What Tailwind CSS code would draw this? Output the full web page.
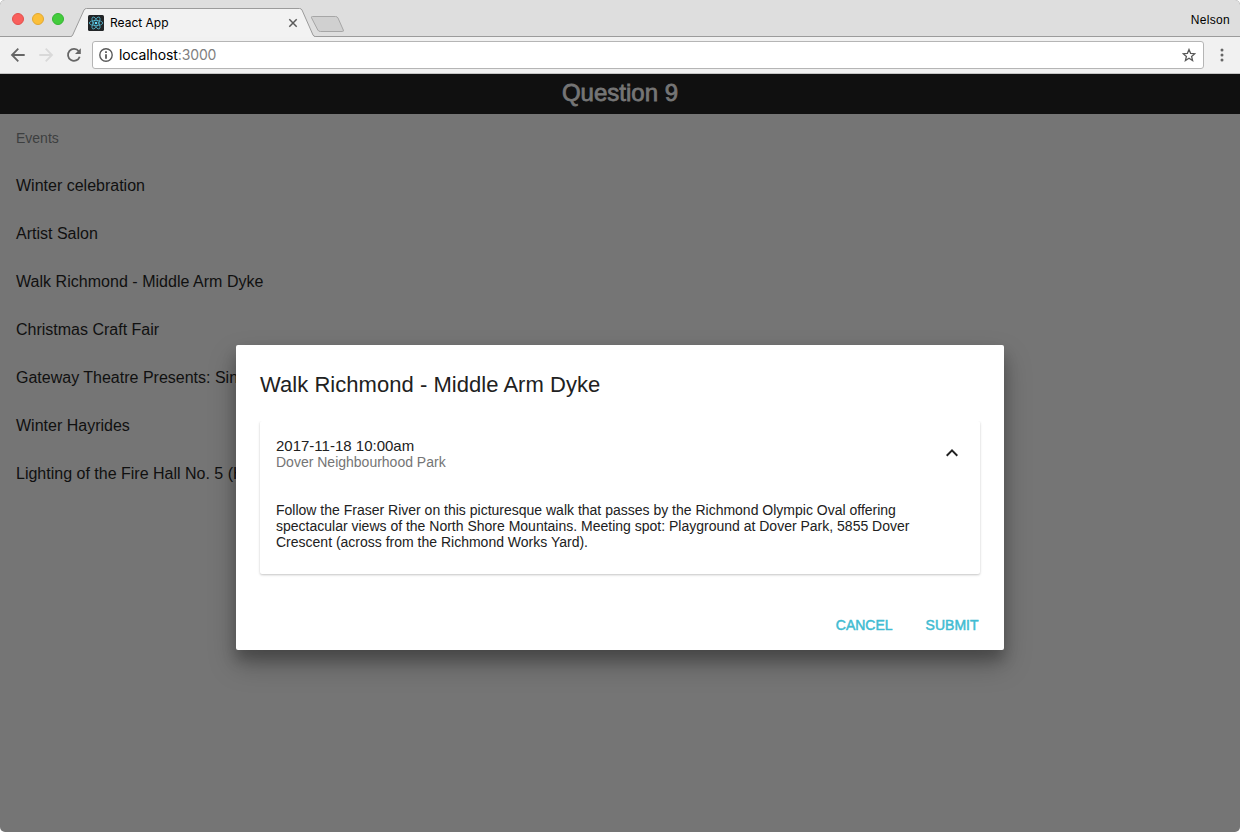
<!DOCTYPE html>
<html lang="en">
<head>
<meta charset="utf-8">
<title>React App</title>
<script src="https://cdn.jsdelivr.net/npm/@tailwindcss/browser@4"></script>
</head>
<body class="bg-white">
<div class="relative flex h-[832px] w-[1240px] flex-col overflow-hidden rounded-[5px] bg-[#757575] font-['Liberation_Sans',sans-serif]">
  <!-- Tab strip -->
  <div class="relative flex h-9 shrink-0 items-start bg-[#dedede] font-[Inter,sans-serif]">
    <svg class="absolute left-0 top-0" width="1240" height="38" viewBox="0 0 1240 38" fill="none">
      <path d="M0 36.5H70.5Q72 36.5 72.7 35L84 10Q84.7 8.5 86.5 8.5H299.500Q301.300 8.500 302 10L313 35Q313.700 36.500 315.500 36.500H1240V38H0Z" fill="#f2f2f2"/>
      <path d="M0 36.5H70.5Q72 36.5 72.7 35L84 10Q84.7 8.5 86.5 8.5H299.5Q301.300 8.500 302 10L313 35Q313.700 36.500 315.500 36.500H1240" stroke="#9b9b9b"/>
      <path d="M312.500 16.500H335.500Q337.300 16.500 338 18L343.300 30Q344 31.500 342.200 31.500H320.500Q318.500 31.500 317.800 30L311.500 17.800Q311 16.500 312.500 16.500Z" fill="#d0d0d0" stroke="#a6a6a6"/>
    </svg>
    <div class="relative ml-3 mt-[13px] flex gap-2">
      <div class="size-3 rounded-full border border-[#e2504d] bg-[#f95f5c]"></div>
      <div class="size-3 rounded-full border border-[#e0a833] bg-[#fbbf39]"></div>
      <div class="size-3 rounded-full border border-[#35b434] bg-[#43cc3c]"></div>
    </div>
    <svg class="relative ml-6 mt-[15px]" width="16" height="16" viewBox="0 0 16 16">
      <rect width="16" height="16" rx="1.500" fill="#222527"/>
      <g fill="none" stroke="#55b8d0" stroke-width=".8">
        <ellipse cx="8" cy="8" rx="6.700" ry="2.600"/>
        <ellipse cx="8" cy="8" rx="6.700" ry="2.600" transform="rotate(60 8 8)"/>
        <ellipse cx="8" cy="8" rx="6.700" ry="2.600" transform="rotate(120 8 8)"/>
      </g>
      <circle cx="8" cy="8" r="1.300" fill="#61dafb"/>
    </svg>
    <span class="relative ml-1.5 mt-[15px] w-[178px] text-[12px] leading-4 text-black">React App</span>
    <svg class="relative mt-[18px]" width="10" height="10" viewBox="0 0 10 10"><path d="M1.300 1.300 8.700 8.700M8.700 1.300 1.300 8.700" stroke="#5a5a5a" stroke-width="1.500"/></svg>
    <span class="relative ml-auto mr-[10px] mt-3 font-['Liberation_Sans',sans-serif] text-[12px] leading-4 tracking-[0.3px] text-black">Nelson</span>
  </div>
  <!-- Toolbar -->
  <div class="relative flex h-[38px] shrink-0 items-center border-b border-[#c4c4c4] font-[Inter,sans-serif]">
    <div class="absolute inset-x-0 bottom-0 top-px bg-[#f1f1f1]"></div>
    <svg class="relative ml-2.5" width="16" height="16" viewBox="0 0 16 16" fill="none" stroke="#666" stroke-width="1.800"><path d="M14.700 8H2.500M8.300 1.700 2 8l6.300 6.300"/></svg>
    <svg class="relative ml-3" width="16" height="16" viewBox="0 0 16 16" fill="none" stroke="#d9d9d9" stroke-width="1.800"><path d="M1.300 8h12.200M7.700 1.700 14 8l-6.300 6.300"/></svg>
    <svg class="relative ml-3" width="16" height="16" viewBox="0 0 16 16"><path d="M12.800 4.200A6 6 0 1 0 13.700 9.700" fill="none" stroke="#666" stroke-width="1.800"/><path d="M14.800 1.200V7H9Z" fill="#666"/></svg>
    <div class="relative ml-2.5 flex h-7 w-[1112px] items-center rounded-[3px] border border-[#b5b5b5] bg-white">
      <svg class="ml-1.5" width="14" height="14" viewBox="0 0 14 14"><circle cx="7" cy="7" r="6.200" fill="none" stroke="#5a5a5a" stroke-width="1.400"/><path d="M6.100 6.200h1.800v4.600H6.100zM6.100 3.200h1.800v1.800H6.100z" fill="#5a5a5a"/></svg>
      <span class="ml-1.5 text-[14px] leading-5 tracking-[-0.12px] text-black">localhost<span class="text-[#808080]">:3000</span></span>
      <svg class="ml-auto mr-[7px]" width="14" height="14" viewBox="0 0 14 14"><path d="m7 1.500 1.600 3.800 4.200.400-3.200 2.700 1 4.100L7 10.300l-3.600 2.200 1-4.100L1.200 5.700l4.200-.400Z" fill="none" stroke="#5a5a5a" stroke-width="1.300"/></svg>
    </div>
    <svg class="relative ml-4" width="4" height="14" viewBox="0 0 4 14" fill="#666"><circle cx="2" cy="2" r="1.500"/><circle cx="2" cy="7" r="1.500"/><circle cx="2" cy="12" r="1.500"/></svg>
  </div>
  <!-- Page behind the overlay -->
  <h1 class="h-10 shrink-0 bg-[#101010] text-center text-[24px] leading-[38px] text-[#757575] [-webkit-text-stroke:0.8px_#757575]">Question 9</h1>
  <div class="px-4 text-[14px] leading-[48px] text-[#3d3f40]">Events</div>
  <ul class="px-4 text-[16px] leading-[48px] text-[#101010]">
    <li>Winter celebration</li>
    <li>Artist Salon</li>
    <li class="tracking-[0.03px]">Walk Richmond - Middle Arm Dyke</li>
    <li>Christmas Craft Fair</li>
    <li>Gateway Theatre Presents: Sing</li>
    <li>Winter Hayrides</li>
    <li>Lighting of the Fire Hall No. 5 (Ha</li>
  </ul>
  <!-- Dialog -->
  <div class="absolute left-[236px] top-[345px] flex h-[305px] w-[768px] flex-col rounded-[2px] bg-white px-6 text-[#212121] shadow-[0_14px_28px_rgba(0,0,0,0.25),0_10px_14px_rgba(0,0,0,0.22)]">
    <h2 class="pt-6 text-[22px] leading-8 tracking-[0.04px]">Walk Richmond - Middle Arm Dyke</h2>
    <div class="mt-5 h-[153px] rounded-[2px] px-4 shadow-[0_1px_3px_rgba(0,0,0,0.12),0_1px_2px_rgba(0,0,0,0.12)] [clip-path:inset(0_-8px_-8px_-8px)]">
      <div class="flex justify-between pt-[17px]">
        <div>
          <div class="text-[15px] leading-4">2017-11-18 10:00am</div>
          <div class="text-[14px] leading-4 text-[#757575]">Dover Neighbourhood Park</div>
        </div>
        <svg class="mt-[3px]" width="24" height="24" viewBox="0 0 24 24"><path d="m12 8-6 6 1.410 1.410L12 10.830l4.590 4.580L18 14z" fill="#212121"/></svg>
      </div>
      <p class="mt-8 w-[648px] text-[14px] leading-4">Follow the Fraser River on this picturesque walk that passes by the Richmond Olympic Oval offering<br>spectacular views of the North Shore Mountains. Meeting spot: Playground at Dover Park, 5855 Dover<br>Crescent (across from the Richmond Works Yard).</p>
    </div>
    <div class="mt-[33px] flex justify-end gap-[33px] pr-[1.5px] text-[14px] leading-9 text-[#41bcd2] [-webkit-text-stroke:0.5px_#41bcd2]">
      <button>CANCEL</button>
      <button>SUBMIT</button>
    </div>
  </div>
</div>
</body>
</html>
